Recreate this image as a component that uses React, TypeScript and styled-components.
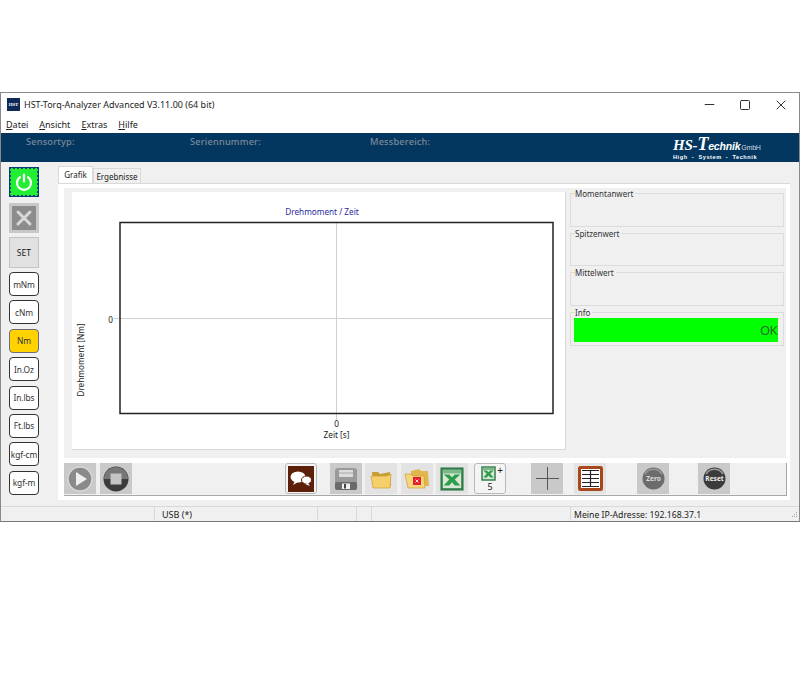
import React from 'react';
import styled, { createGlobalStyle } from 'styled-components';
import { X, Minus, Square } from 'lucide-react';

const UI_FONT = '"Noto Sans", "Open Sans", sans-serif';

const GlobalStyle = createGlobalStyle`
  html, body {
    margin: 0;
    background: #fff;
  }
  body {
    width: 800px;
    height: 700px;
    overflow: hidden;
    font-family: ${UI_FONT};
    color: #222;
  }
`;

const Page = styled.div`
  padding-top: 92px;
`;

const Window = styled.div`
  height: 430px;
  box-sizing: border-box;
  border: 1px solid #8a8a8a;
  border-bottom: 1px solid #777;
  display: flex;
  flex-direction: column;
  background: #f0f0f0;
`;

const TitleBar = styled.div`
  height: 23px;
  display: flex;
  align-items: center;
  background: #fff;
  padding-left: 6px;
  flex-shrink: 0;
`;

const AppIcon = styled.div`
  width: 13px;
  height: 13px;
  background: #0e2b58;
  color: #fff;
  font: bold 5px "Liberation Serif", serif;
  display: flex;
  align-items: center;
  justify-content: center;
  margin-right: 4px;
  letter-spacing: -0.2px;
`;

const TitleText = styled.div`
  font-size: 9px;
  flex: 1;
`;

const WinButtons = styled.div`
  display: flex;
  align-items: center;
  gap: 22px;
  padding-right: 10px;
  color: #333;
`;

const MenuBar = styled.div`
  height: 16px;
  margin-bottom: 1px;
  display: flex;
  align-items: center;
  gap: 11px;
  padding-left: 5px;
  background: #fff;
  font-size: 9px;
  flex-shrink: 0;
  box-shadow: 0 1px 0 #fff;
  u {
    text-underline-offset: 1px;
  }
`;

const Header = styled.div`
  height: 29px;
  background: #04375f;
  display: flex;
  position: relative;
  flex-shrink: 0;
  padding-top: 2px;
  box-sizing: border-box;
`;

const HeaderLabel = styled.div<{ $w: number }>`
  width: ${(p) => p.$w}px;
  color: #7c8a99;
  font-size: 9.2px;
  font-weight: 500;
  letter-spacing: 0.2px;
  line-height: 14px;
`;

const Logo = styled.div`
  position: absolute;
  left: 672px;
  top: 4px;
  color: #fff;
  line-height: 1;
`;

const LogoMain = styled.div`
  font: italic bold 10.5px "Liberation Sans", sans-serif;
  white-space: nowrap;
  line-height: 14px;
  letter-spacing: -0.2px;
  b {
    font: italic bold 15px "Liberation Serif", serif;
  }
  i {
    font: italic bold 18px "Liberation Serif", serif;
    line-height: 14px;
  }
  span {
    font: 7px "Liberation Sans", sans-serif;
    margin-left: 1px;
    color: #cfd8e0;
  }
`;

const LogoSub = styled.div`
  font: bold 5.6px "Liberation Sans", sans-serif;
  white-space: pre;
  letter-spacing: 0.55px;
`;

const Body = styled.div`
  flex: 1;
  display: flex;
  min-height: 0;
`;

const Sidebar = styled.div`
  width: 57px;
  flex-shrink: 0;
  box-sizing: border-box;
  padding: 5px 0 0 8px;
  display: flex;
  flex-direction: column;
`;

const PowerButton = styled.div`
  width: 30px;
  height: 30px;
  box-sizing: border-box;
  background: #22ee33;
  border: 2px dotted #0a3a78;
  outline: 1px solid #0a3a78;
  outline-offset: -1px;
  display: flex;
  align-items: center;
  justify-content: center;
  margin-bottom: 6px;
`;

const CancelButton = styled.div`
  width: 30px;
  height: 30px;
  background: #c8c8c8;
  display: flex;
  align-items: center;
  justify-content: center;
  margin-bottom: 4px;
`;

const CancelInner = styled.div`
  width: 24px;
  height: 24px;
  background: #8c8c8c;
  display: flex;
  align-items: center;
  justify-content: center;
`;

const SetButton = styled.div`
  width: 30px;
  height: 31px;
  box-sizing: border-box;
  background: #e1e1e1;
  border: 1px solid #c4c4c4;
  display: flex;
  align-items: center;
  justify-content: center;
  font-size: 8.6px;
  color: #222;
  margin-bottom: 4px;
`;

const UnitList = styled.div`
  display: flex;
  flex-direction: column;
  gap: 4.4px;
`;

const UnitButton = styled.div<{ $active?: boolean }>`
  width: 30px;
  height: 24px;
  box-sizing: border-box;
  border: 1.3px solid ${(p) => (p.$active ? '#6c6a80' : '#333')};
  border-radius: 4px;
  background: ${(p) => (p.$active ? '#ffd200' : '#fff')};
  display: flex;
  align-items: center;
  justify-content: center;
  font-size: 8.4px;
  color: #333;
  white-space: nowrap;
  letter-spacing: -0.1px;
`;

const Content = styled.div`
  width: 732px;
  flex-shrink: 0;
  padding-top: 4px;
`;

const Tabs = styled.div`
  display: flex;
  align-items: flex-end;
  height: 17px;
`;

const Tab = styled.div<{ $active?: boolean }>`
  width: ${(p) => (p.$active ? 35 : 48)}px;
  height: ${(p) => (p.$active ? 17 : 15)}px;
  box-sizing: border-box;
  padding-top: 1px;
  text-align: center;
  background: ${(p) => (p.$active ? '#fff' : '#f0f0f0')};
  border: 1px solid #d9d9d9;
  border-bottom: none;
  font-size: 8px;
  line-height: 13px;
`;

const TabPanel = styled.div`
  background: #fff;
  border-top: 1px solid #d9d9d9;
  height: 317px;
  box-sizing: border-box;
  padding: 4px 4px 0 6px;
`;

const Analysis = styled.div`
  height: 270px;
  background: #f0f0f0;
  display: flex;
  padding: 4px 0 8px 8px;
  box-sizing: border-box;
`;

const ChartCard = styled.div`
  width: 494px;
  height: 258px;
  flex-shrink: 0;
  background: #fff;
  border-right: 1px solid #d8d8d8;
  border-bottom: 1px solid #d8d8d8;
  box-sizing: border-box;
`;

const ReadoutColumn = styled.div`
  margin-left: 4px;
  width: 214px;
  display: flex;
  flex-direction: column;
  gap: 6px;
  padding-top: 1px;
`;

const GroupBox = styled.div<{ $h: number }>`
  position: relative;
  height: ${(p) => p.$h}px;
  box-sizing: border-box;
  border: 1px solid #dcdcdc;
`;

const GroupLabel = styled.div`
  position: absolute;
  left: 4px;
  top: -5px;
  padding-right: 2px;
  background: #f0f0f0;
  font-size: 8px;
  line-height: 10px;
  color: #333;
`;

const OkBar = styled.div`
  position: absolute;
  left: 3px;
  right: 5px;
  top: 5px;
  height: 24px;
  background: #00ff00;
  color: #2a6a2a;
  font-size: 13px;
  letter-spacing: -0.6px;
  line-height: 24px;
  text-align: right;
  padding-right: 1px;
  box-sizing: border-box;
`;

const Toolbar = styled.div`
  margin-top: 5px;
  height: 33px;
  width: 723px;
  box-sizing: border-box;
  background: #f0f0f0;
  border-bottom: 1px solid #a8a8a8;
  border-right: 1px solid #a8a8a8;
  display: flex;
  align-items: flex-start;
`;

const ToolButton = styled.div<{ $ml: number; $raised?: boolean; $dim?: boolean }>`
  width: 32px;
  height: 31px;
  margin-left: ${(p) => p.$ml}px;
  flex-shrink: 0;
  box-sizing: border-box;
  background: ${(p) => (p.$dim ? '#c9c9c9' : p.$raised ? '#f4f4f4' : '#e3e3e3')};
  border: ${(p) => (p.$raised ? '1px solid #b8b8b8' : '1px solid transparent')};
  border-radius: ${(p) => (p.$raised ? '3px' : '0')};
  display: flex;
  flex-direction: column;
  align-items: center;
  justify-content: center;
  font-size: 9px;
  line-height: 9px;
`;

const StatusBar = styled.div`
  position: relative;
  height: 15px;
  display: flex;
  flex-shrink: 0;
  background: #f0f0f0;
  border-top: 1px solid #d8d8d8;
  font-size: 9px;
  box-sizing: border-box;
`;

const StatusCell = styled.div<{ $w?: number }>`
  width: ${(p) => (p.$w ? `${p.$w}px` : 'auto')};
  flex: ${(p) => (p.$w ? '0 0 auto' : '1')};
  box-sizing: border-box;
  border-right: 1px solid #d8d8d8;
  padding-left: 7px;
  line-height: 16px;
  white-space: nowrap;
  &:last-of-type {
    border-right: none;
    padding-left: 3px;
    font-size: 8.7px;
  }
`;

const Grip = styled.svg`
  position: absolute;
  right: 1px;
  bottom: 1px;
`;

const PowerIcon = () => (
  <svg width="20" height="20" viewBox="0 0 20 20" fill="none" stroke="#fff" strokeWidth="2.2" strokeLinecap="round">
    <path d="M6 5.2a7 7 0 1 0 8 0" />
    <path d="M10 2.5v7" />
  </svg>
);

const PlotChart = () => (
  <svg width="494" height="258" viewBox="0 0 494 258" fontFamily={UI_FONT} fontSize="8.2" fill="#222">
    <text x="250" y="23" textAnchor="middle" fill="#2a2aa0">Drehmoment / Zeit</text>
    <path d="M264.5 30v199M42 126.5h439" stroke="#d0d0d0" strokeWidth="1" />
    <rect x="48" y="30.5" width="433" height="191" fill="none" stroke="#222" strokeWidth="1.5" />
    <text x="41" y="131" textAnchor="end">0</text>
    <text x="264.5" y="235" textAnchor="middle">0</text>
    <text x="264.5" y="246" textAnchor="middle">Zeit [s]</text>
    <text transform="translate(12 168) rotate(-90)" textAnchor="middle">Drehmoment [Nm]</text>
  </svg>
);

const PlayIcon = () => (
  <svg width="26" height="26" viewBox="0 0 26 26">
    <circle cx="13" cy="13" r="12" fill="#8a8a8a" stroke="#d8d8d8" strokeWidth="1.5" />
    <path d="M9 6l11 7-11 7z" fill="#eee" />
  </svg>
);

const StopIcon = () => (
  <svg width="26" height="26" viewBox="0 0 26 26">
    <circle cx="13" cy="13" r="12.5" fill="#3c3c3c" />
    <path d="M1 13a12 12 0 0 1 24 0z" fill="#777" />
    <rect x="7.5" y="7.5" width="11" height="11" fill="#c4c4c4" />
  </svg>
);

const ChatIcon = () => (
  <svg width="26" height="26" viewBox="0 0 26 26">
    <rect width="26" height="26" fill="#5b1f0a" />
    <ellipse cx="10" cy="11" rx="7.5" ry="5.5" fill="#fff" />
    <path d="M7 15l-2 4 5-3z" fill="#fff" />
    <ellipse cx="18.5" cy="14" rx="5" ry="4" fill="#fff" stroke="#5b1f0a" />
    <path d="M20 17l2 3-5-2z" fill="#fff" />
  </svg>
);

const SaveIcon = () => (
  <svg width="24" height="24" viewBox="0 0 24 24">
    <rect x="1" y="1" width="22" height="22" rx="3" fill="#9a9a9a" />
    <rect x="5" y="3" width="14" height="7" fill="#dcdcdc" />
    <path d="M5 6h14" stroke="#aaa" />
    <rect x="1" y="15" width="22" height="8" rx="2" fill="#6a6a6a" />
    <rect x="8" y="16.5" width="8" height="5.5" fill="#eee" />
    <rect x="10" y="17" width="2" height="4.5" fill="#444" />
  </svg>
);

const FolderIcon = () => (
  <svg width="22" height="20" viewBox="0 0 22 20">
    <path d="M2 3h6l2 2 10-2 1 14H3z" fill="#c89d35" />
    <path d="M1 7h16l4-2-1 14H3z" fill="#f4cf6c" stroke="#c89d35" strokeWidth="0.7" />
  </svg>
);

const FolderDeleteIcon = () => (
  <svg width="26" height="22" viewBox="0 0 26 22">
    <path d="M7 3l8-2 2 2h7l1 15H7z" fill="#e0b64e" />
    <path d="M1 6h6l2 2h11l1 12H4z" fill="#f6d67c" stroke="#c89d35" strokeWidth="0.7" />
    <rect x="9" y="9" width="8" height="8" fill="#e6202a" />
    <path d="M11.5 11.5l3 3m0-3l-3 3" stroke="#fff" strokeWidth="0.8" />
  </svg>
);

const ExcelIcon = ({ size }: { size: number }) => (
  <svg width={size} height={size} viewBox="0 0 26 26">
    <rect x="0.5" y="0.5" width="25" height="25" fill="#2c7a45" />
    <rect x="3" y="3" width="20" height="20" fill="#d9e8d4" />
    <path d="M3 3h20v4H3z" fill="#7cb888" />
    <path d="M4 8h6l3 3 3-3h6l-6 5.5 6 6.5h-6l-3-3.5-3 3.5H4l6-6.5z" fill="#2f9c4e" />
  </svg>
);

const ExcelPlusRow = styled.div`
  display: flex;
  align-items: flex-start;
  gap: 1px;
  margin-bottom: 1px;
  margin-left: 4px;
  font-size: 10px;
  line-height: 9px;
`;

const CrossIcon = () => (
  <svg width="23" height="23" viewBox="0 0 23 23" stroke="#555" strokeWidth="1">
    <path d="M11.5 0v23M0 11.5h23" />
  </svg>
);

const TableIcon = () => (
  <svg width="25" height="25" viewBox="0 0 25 25">
    <rect x="1.5" y="1.5" width="22" height="22" rx="1" fill="#fff" stroke="#a8481a" strokeWidth="3" />
    <path d="M4 4.5h17M4 8.5h17M4 12.5h17M4 16.5h17M4 20.5h17M12.5 4v17" stroke="#222" strokeWidth="1.2" />
  </svg>
);

const DialIcon = ({ label, dark }: { label: string; dark?: boolean }) => (
  <svg width="23" height="23" viewBox="0 0 23 23" fontFamily={UI_FONT}>
    <circle cx="11.5" cy="11.5" r="11" fill={dark ? '#3c3c3c' : '#6c6c6c'} />
    <path d="M3 7a10 10 0 0 1 17 0" stroke="#999" strokeWidth="1.6" fill="none" />
    <text x="11.5" y="14" textAnchor="middle" fontSize="6.6" fontWeight="700" fill={dark ? '#eee' : '#ddd'}>{label}</text>
  </svg>
);

const UNITS = ['mNm', 'cNm', 'Nm', 'In.Oz', 'In.lbs', 'Ft.lbs', 'kgf-cm', 'kgf-m'];

const App = () => (
  <Page>
    <GlobalStyle />
    <Window>
      <TitleBar>
        <AppIcon>HST</AppIcon>
        <TitleText>HST-Torq-Analyzer Advanced V3.11.00 (64 bit)</TitleText>
        <WinButtons>
          <Minus size={15} strokeWidth={1.6} />
          <Square size={12} strokeWidth={2} />
          <X size={16} strokeWidth={1.5} />
        </WinButtons>
      </TitleBar>
      <MenuBar>
        <span><u>D</u>atei</span>
        <span><u>A</u>nsicht</span>
        <span><u>E</u>xtras</span>
        <span><u>H</u>ilfe</span>
      </MenuBar>
      <Header>
        <HeaderLabel $w={25} />
        <HeaderLabel $w={164}>Sensortyp:</HeaderLabel>
        <HeaderLabel $w={180}>Seriennummer:</HeaderLabel>
        <HeaderLabel $w={120}>Messbereich:</HeaderLabel>
        <Logo>
          <LogoMain><b>HS-</b><i>T</i>echnik<span>GmbH</span></LogoMain>
          <LogoSub>{'High  -  System  -  Technik'}</LogoSub>
        </Logo>
      </Header>
      <Body>
        <Sidebar>
          <PowerButton><PowerIcon /></PowerButton>
          <CancelButton>
            <CancelInner>
              <X size={24} color="#d8d8d8" strokeWidth={3} />
            </CancelInner>
          </CancelButton>
          <SetButton>SET</SetButton>
          <UnitList>
            {UNITS.map((u) => (
              <UnitButton key={u} $active={u === 'Nm'}>{u}</UnitButton>
            ))}
          </UnitList>
        </Sidebar>
        <Content>
          <Tabs>
            <Tab $active>Grafik</Tab>
            <Tab>Ergebnisse</Tab>
          </Tabs>
          <TabPanel>
            <Analysis>
              <ChartCard><PlotChart /></ChartCard>
              <ReadoutColumn>
                <GroupBox $h={34}><GroupLabel>Momentanwert</GroupLabel></GroupBox>
                <GroupBox $h={33}><GroupLabel>Spitzenwert</GroupLabel></GroupBox>
                <GroupBox $h={34}><GroupLabel>Mittelwert</GroupLabel></GroupBox>
                <GroupBox $h={34}>
                  <GroupLabel>Info</GroupLabel>
                  <OkBar>OK</OkBar>
                </GroupBox>
              </ReadoutColumn>
            </Analysis>
            <Toolbar>
              <ToolButton $ml={0} $dim><PlayIcon /></ToolButton>
              <ToolButton $ml={4} $dim><StopIcon /></ToolButton>
              <ToolButton $ml={153} $raised><ChatIcon /></ToolButton>
              <ToolButton $ml={13} $dim><SaveIcon /></ToolButton>
              <ToolButton $ml={3}><FolderIcon /></ToolButton>
              <ToolButton $ml={4}><FolderDeleteIcon /></ToolButton>
              <ToolButton $ml={3}><ExcelIcon size={24} /></ToolButton>
              <ToolButton $ml={6} $raised>
                <ExcelPlusRow><ExcelIcon size={15} />+</ExcelPlusRow>
                5
              </ToolButton>
              <ToolButton $ml={25} $dim><CrossIcon /></ToolButton>
              <ToolButton $ml={11}><TableIcon /></ToolButton>
              <ToolButton $ml={31} $dim><DialIcon label="Zero" /></ToolButton>
              <ToolButton $ml={29} $dim><DialIcon label="Reset" dark /></ToolButton>
            </Toolbar>
          </TabPanel>
        </Content>
      </Body>
      <StatusBar>
        <StatusCell $w={154} />
        <StatusCell $w={163}>USB (*)</StatusCell>
        <StatusCell $w={39} />
        <StatusCell $w={15} />
        <StatusCell $w={199} />
        <StatusCell>Meine IP-Adresse: 192.168.37.1</StatusCell>
        <Grip width="9" height="9" viewBox="0 0 9 9" fill="#a8a8a8">
          <rect x="7" y="1" width="1" height="1" />
          <rect x="5" y="3" width="1" height="1" />
          <rect x="7" y="3" width="1" height="1" />
          <rect x="3" y="5" width="1" height="1" />
          <rect x="5" y="5" width="1" height="1" />
          <rect x="7" y="5" width="1" height="1" />
        </Grip>
      </StatusBar>
    </Window>
  </Page>
);

export default App;
